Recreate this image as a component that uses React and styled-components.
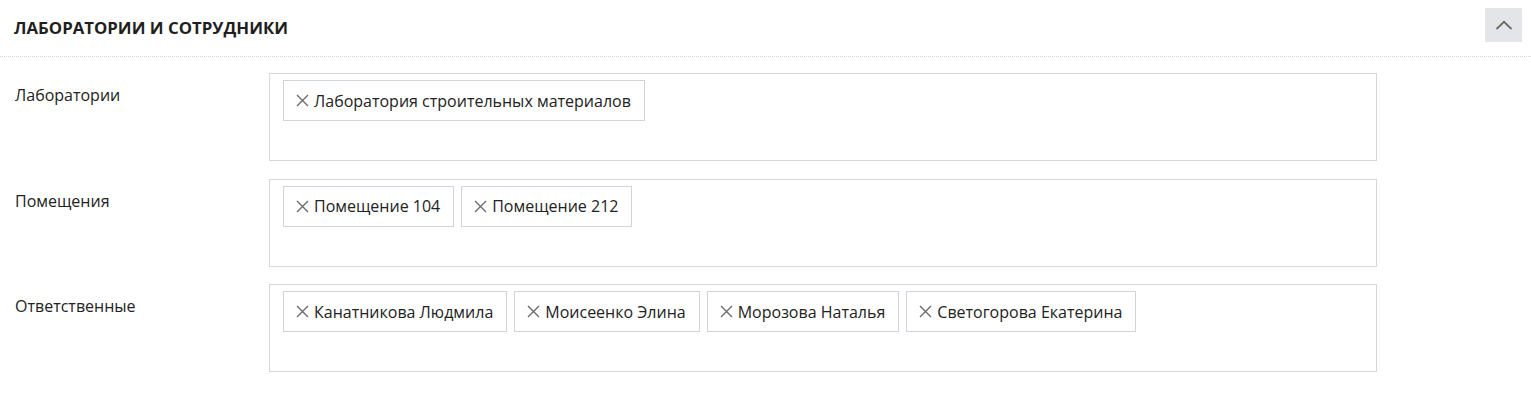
import React from "react";
import styled, { createGlobalStyle } from "styled-components";

const GlobalStyle = createGlobalStyle`
  body {
    margin: 0;
    background: #fff;
    font-family: "Open Sans", "Noto Sans", sans-serif;
    color: #222;
  }
`;

const Panel = styled.section`
  width: 1531px;
`;

const PanelHeader = styled.header`
  display: flex;
  justify-content: space-between;
  align-items: flex-start;
  height: 57px;
  padding: 8px 9px 0 14px;
  box-sizing: border-box;
  border-bottom: 1px dotted #d6d6d6;
`;

const Title = styled.h2`
  margin: 0;
  padding-top: 8px;
  font-size: 16.8px;
  line-height: 24px;
  font-weight: 700;
  color: #1f1f1f;
`;

const CollapseButton = styled.button`
  width: 37px;
  height: 34px;
  border: none;
  background: #e4e5e8;
  display: flex;
  align-items: center;
  justify-content: center;
  padding: 0;
  cursor: pointer;
`;

const Body = styled.div`
  display: flex;
  flex-direction: column;
  gap: 17.5px;
  padding-top: 16px;
`;

const FieldRow = styled.div`
  display: grid;
  grid-template-columns: 269px 1108px;
  align-items: start;
`;

const Label = styled.label`
  font-size: 16px;
  line-height: 22px;
  color: #222;
  padding: 11px 0 0 15px;
`;

const TagBox = styled.div`
  height: 88px;
  box-sizing: border-box;
  border: 1px solid #d4d8de;
  padding: 6px 13px;
  display: flex;
  flex-wrap: wrap;
  align-content: flex-start;
  gap: 7px;
`;

const Tag = styled.span`
  display: inline-flex;
  align-items: center;
  height: 41px;
  box-sizing: border-box;
  border: 1px solid #d0d5dc;
  padding: 0 13px 0 11px;
  font-size: 16px;
  color: #222;
  gap: 4px;
`;

const Remove = styled.span`
  display: inline-flex;
  cursor: pointer;
`;

const XIcon = () => (
  <svg width="15" height="15" viewBox="0 0 15 15">
    <path d="M2 2 L13 13 M13 2 L2 13" stroke="#6b6b6b" strokeWidth="1.4" fill="none" />
  </svg>
);

const fields = [
  { id: "labs", label: "Лаборатории", tags: ["Лаборатория строительных материалов"] },
  { id: "rooms", label: "Помещения", tags: ["Помещение 104", "Помещение 212"] },
  {
    id: "people",
    label: "Ответственные",
    tags: ["Канатникова Людмила", "Моисеенко Элина", "Морозова Наталья", "Светогорова Екатерина"],
  },
];

const App = () => {
  return (
    <>
      <GlobalStyle />
      <Panel>
        <PanelHeader>
          <Title>ЛАБОРАТОРИИ И СОТРУДНИКИ</Title>
          <CollapseButton aria-label="Свернуть">
            <svg width="18" height="10" viewBox="0 0 18 10">
              <path d="M1.5 9 L9 1.8 L16.5 9" stroke="#6f6a66" strokeWidth="1.8" fill="none" />
            </svg>
          </CollapseButton>
        </PanelHeader>
        <Body>
          {fields.map((f) => (
            <FieldRow key={f.id}>
              <Label>{f.label}</Label>
              <TagBox>
                {f.tags.map((t) => (
                  <Tag key={t}>
                    <Remove>
                      <XIcon />
                    </Remove>
                    {t}
                  </Tag>
                ))}
              </TagBox>
            </FieldRow>
          ))}
        </Body>
      </Panel>
    </>
  );
};

export default App;
